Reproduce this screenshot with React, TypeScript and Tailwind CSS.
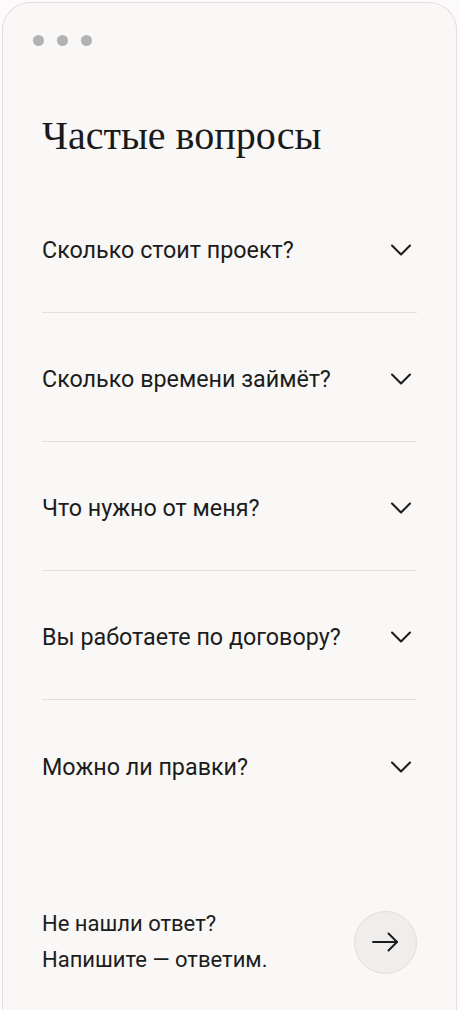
import { ChevronDown } from "lucide-react";

const QUESTIONS = [
  "Сколько стоит проект?",
  "Сколько времени займёт?",
  "Что нужно от меня?",
  "Вы работаете по договору?",
  "Можно ли правки?",
];

export default function App() {
  return (
    <div className="min-h-screen overflow-hidden bg-[#fcfafb] pt-[2px] pl-[2px] pr-[3px]">
      <div
        className="min-h-[1100px] rounded-t-[28px] border border-b-0 border-[#e7dce5] bg-[#f9f8f6] text-[#1c1c1c]"
        style={{ fontFamily: "Roboto, 'Noto Sans', sans-serif" }}
      >
        <div className="flex gap-[13px] pl-[30px] pt-[32px]">
          <span className="h-[11px] w-[11px] rounded-full bg-[#b3b3b3]" />
          <span className="h-[11px] w-[11px] rounded-full bg-[#b3b3b3]" />
          <span className="h-[11px] w-[11px] rounded-full bg-[#b3b3b3]" />
        </div>

        <div className="px-[39px]">
          <h1
            className="mt-[66px] text-[40px] leading-[48px] font-normal text-[#1a1a1a]"
            style={{ fontFamily: "'Liberation Serif', 'DejaVu Serif', serif" }}
          >
            Частые вопросы
          </h1>

          <div className="mt-[24px]">
            {QUESTIONS.map((q, i) => (
              <div
                key={q}
                className={
                  "flex h-[129px] items-center justify-between pt-[4px] " +
                  (i < QUESTIONS.length - 1 ? "border-b border-[#e3e1de]" : "")
                }
              >
                <span className="text-[23.3px] leading-[30px]">{q}</span>
                <ChevronDown className="-mr-[2px] h-[36px] w-[36px] text-[#1c1c1c]" strokeWidth={1.4} />
              </div>
            ))}
          </div>

          <div className="mt-[77px] flex items-center justify-between">
            <p className="text-[22px] leading-[36px]">
              Не нашли ответ?
              <br />
              Напишите — ответим.
            </p>
            <button
              type="button"
              className="flex h-[63px] w-[63px] items-center justify-center rounded-full border border-[#e1dfdc] bg-[#efeeec]"
            >
              <svg width="27" height="20" viewBox="0 0 27 20" fill="none" stroke="#1c1c1c" strokeWidth="2" strokeLinecap="round" strokeLinejoin="round">
                <path d="M1 10h24" />
                <path d="M16.5 1.5 25 10l-8.5 8.5" />
              </svg>
            </button>
          </div>
        </div>
      </div>
    </div>
  );
}
